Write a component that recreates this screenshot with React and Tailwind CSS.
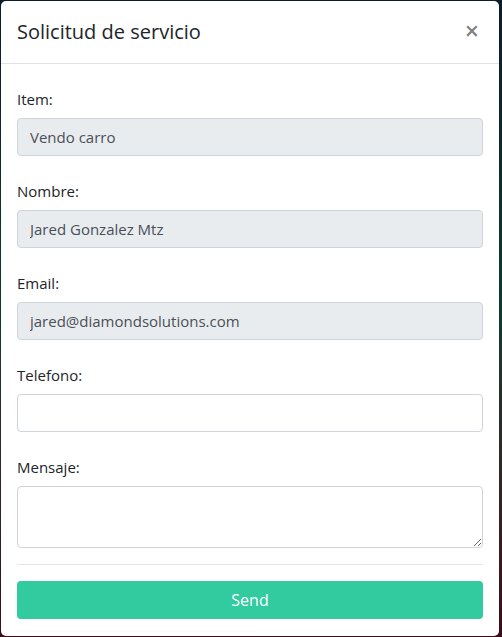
export default function App() {
  const fields = [
    { label: 'Item:', value: 'Vendo carro', readOnly: true },
    { label: 'Nombre:', value: 'Jared Gonzalez Mtz', readOnly: true },
    { label: 'Email:', value: 'jared@diamondsolutions.com', readOnly: true },
    { label: 'Telefono:', value: '', readOnly: false },
  ];

  return (
    <div className="w-[502px] h-[637px] overflow-hidden bg-gradient-to-b from-[#0b1c2a] via-[#0f3a30] to-[#3d0b1c] pt-px pl-px font-['Open_Sans',sans-serif]">
      {/* Modal */}
      <div className="w-[498px] h-[635px] bg-white rounded-[5px] flex flex-col">
        <div className="flex items-center justify-between px-4 py-4 border-b border-[#dee2e6]">
          <h5 className="text-[20px] leading-[30px] font-medium text-[#212529]">Solicitud de servicio</h5>
          <button className="text-[25px] leading-none font-semibold text-black/50 mr-[4px] -mt-[3px]">×</button>
        </div>

        <div className="px-4 pt-6 flex flex-col">
          {fields.map((f, i) => (
            <div key={i} className="flex flex-col mb-6">
              <label className="text-[15px] leading-[22px] text-[#212529] mb-2">{f.label}</label>
              <input
                readOnly
                value={f.value}
                className={`h-[38px] w-full rounded-[4px] border border-[#ced4da] px-3 text-[15px] text-[#495057] outline-none ${f.readOnly ? 'bg-[#e9ecef]' : 'bg-white'}`}
              />
            </div>
          ))}
          <div className="flex flex-col">
            <label className="text-[15px] leading-[22px] text-[#212529] mb-2">Mensaje:</label>
            <textarea className="h-[62px] w-full rounded-[4px] border border-[#ced4da] px-3 py-1.5 text-[15px] text-[#495057] outline-none bg-white" />
          </div>
          <hr className="mt-4 border-t border-[#e3e5e8]" />
          <button className="mt-4 h-[38px] w-full rounded-[4px] bg-[#31cb9f] text-white text-[16px]">Send</button>
        </div>
      </div>
    </div>
  );
}
